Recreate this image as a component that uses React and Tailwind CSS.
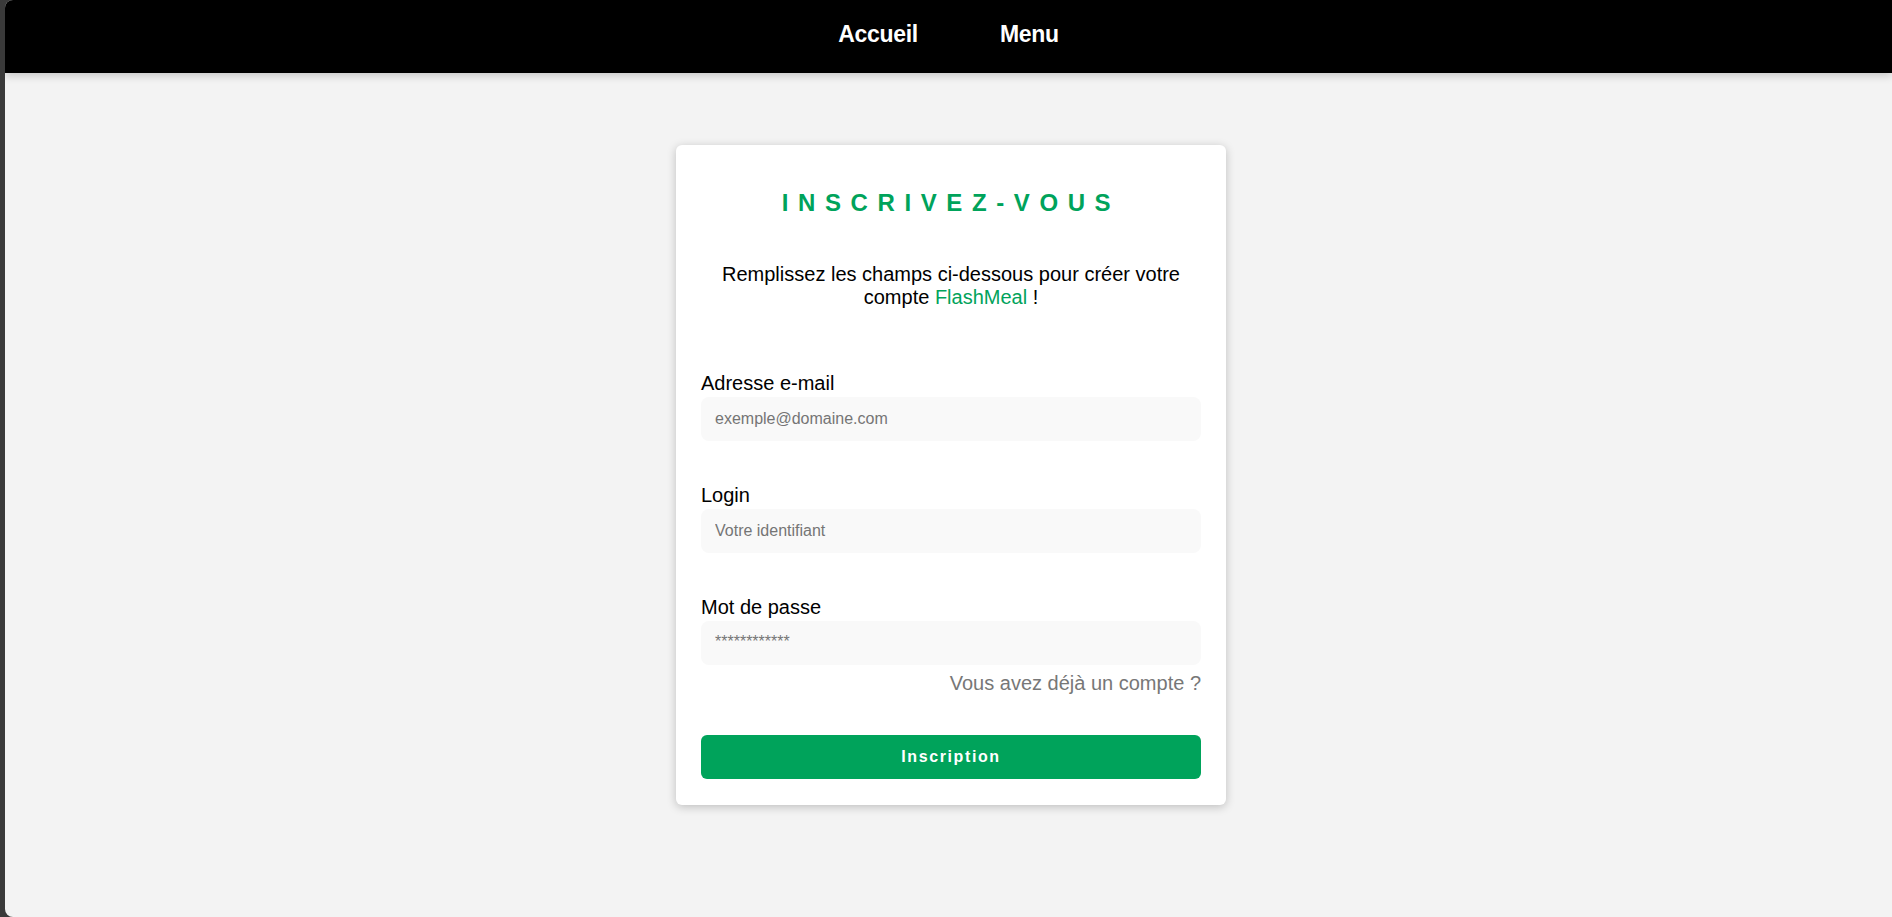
import React from "react";

export default function App() {
  return (
    <div className="h-[917px] w-full bg-[#3a3a3a] pl-[5px] font-['Liberation_Sans',Arial,sans-serif]">
      <div className="flex h-full flex-col overflow-hidden rounded-l-[8px] bg-[#f3f3f3]">
        <nav className="relative z-10 flex h-[73px] shrink-0 items-center justify-center gap-[82px] bg-black pb-[5px] shadow-[0_3px_8px_rgba(0,0,0,0.18)]">
          <a className="text-[23px] font-bold tracking-[-0.3px] text-white">Accueil</a>
          <a className="text-[23px] font-bold tracking-[-0.3px] text-white">Menu</a>
        </nav>
        <main className="flex justify-center pt-[72px]">
          <div className="ml-[5px] w-[550px] rounded-[6px] bg-white px-[25px] pt-[44px] pb-[26px] shadow-[0_2px_10px_rgba(0,0,0,0.22)]">
            <h1 className="text-center text-[24px] font-bold leading-[28px] tracking-[9.6px] text-[#00a35b]">
              INSCRIVEZ-VOUS
            </h1>
            <p className="mt-[46px] text-center text-[20px] leading-[23px] text-black">
              Remplissez les champs ci-dessous pour créer votre compte{" "}
              <span className="text-[#00a35b]">FlashMeal</span> !
            </p>
            <form className="mt-[63px] flex flex-col">
              <label className="text-[20px] leading-[23px] text-black">Adresse e-mail</label>
              <input
                type="email"
                placeholder="exemple@domaine.com"
                className="mt-[2px] h-[44px] w-full rounded-[8px] bg-[#f9f9f9] px-[14px] text-[16px] outline-none placeholder:text-[#757575]"
              />
              <label className="mt-[43px] text-[20px] leading-[23px] text-black">Login</label>
              <input
                type="text"
                placeholder="Votre identifiant"
                className="mt-[2px] h-[44px] w-full rounded-[8px] bg-[#f9f9f9] px-[14px] text-[16px] outline-none placeholder:text-[#757575]"
              />
              <label className="mt-[43px] text-[20px] leading-[23px] text-black">Mot de passe</label>
              <input
                type="password"
                placeholder="************"
                className="mt-[2px] h-[44px] w-full rounded-[8px] bg-[#f9f9f9] px-[14px] pb-[3px] text-[16px] outline-none placeholder:text-[#757575]"
              />
              <a className="mt-[7px] self-end text-[20px] leading-[23px] text-[#777777]">
                Vous avez déjà un compte ?
              </a>
              <button
                type="button"
                className="mt-[40px] h-[44px] w-full rounded-[6px] bg-[#00a35b] text-[16px] font-bold tracking-[1.6px] text-white"
              >
                Inscription
              </button>
            </form>
          </div>
        </main>
      </div>
    </div>
  );
}
